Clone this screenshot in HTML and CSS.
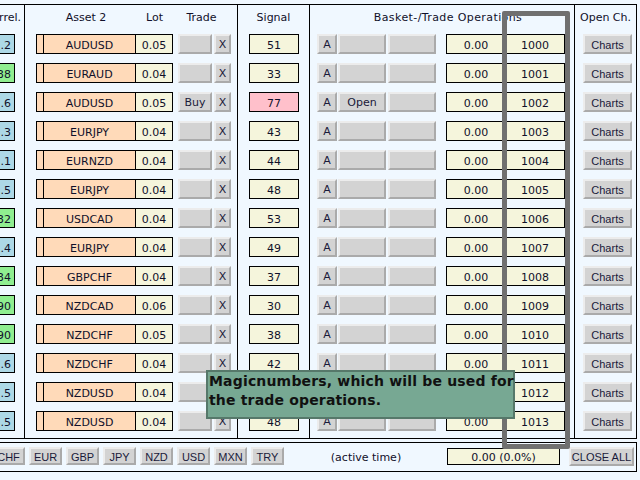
FILE: index.html
```html
<!DOCTYPE html>
<html>
<head>
<meta charset="utf-8">
<link rel="stylesheet" href="styles.css">
</head>
<body>
<div class="stage">
  <div class="panel">
    <div class="col col-a">
      <div class="hdr hdr-a">Correl.</div>
      <div class="row"><div class="box corr blue">.2</div></div>
      <div class="row"><div class="box corr green">38</div></div>
      <div class="row"><div class="box corr blue">.6</div></div>
      <div class="row"><div class="box corr blue">.3</div></div>
      <div class="row"><div class="box corr blue">.1</div></div>
      <div class="row"><div class="box corr blue">.5</div></div>
      <div class="row"><div class="box corr green">32</div></div>
      <div class="row"><div class="box corr blue">.4</div></div>
      <div class="row"><div class="box corr green">34</div></div>
      <div class="row"><div class="box corr green">90</div></div>
      <div class="row"><div class="box corr green">90</div></div>
      <div class="row"><div class="box corr blue">.6</div></div>
      <div class="row"><div class="box corr blue">.5</div></div>
      <div class="row"><div class="box corr blue">.5</div></div>
    </div>
    <div class="col col-b">
      <div class="hdr hdr-b"><span class="h-asset">Asset 2</span><span class="h-lot">Lot</span><span class="h-trade">Trade</span></div>
      <div class="row"><div class="box thin"></div><div class="box asset">AUDUSD</div><div class="box lot">0.05</div><div class="btn trade"></div><div class="btn x">X</div></div>
      <div class="row"><div class="box thin"></div><div class="box asset">EURAUD</div><div class="box lot">0.04</div><div class="btn trade"></div><div class="btn x">X</div></div>
      <div class="row"><div class="box thin"></div><div class="box asset">AUDUSD</div><div class="box lot">0.05</div><div class="btn trade">Buy</div><div class="btn x">X</div></div>
      <div class="row"><div class="box thin"></div><div class="box asset">EURJPY</div><div class="box lot">0.04</div><div class="btn trade"></div><div class="btn x">X</div></div>
      <div class="row"><div class="box thin"></div><div class="box asset">EURNZD</div><div class="box lot">0.04</div><div class="btn trade"></div><div class="btn x">X</div></div>
      <div class="row"><div class="box thin"></div><div class="box asset">EURJPY</div><div class="box lot">0.04</div><div class="btn trade"></div><div class="btn x">X</div></div>
      <div class="row"><div class="box thin"></div><div class="box asset">USDCAD</div><div class="box lot">0.04</div><div class="btn trade"></div><div class="btn x">X</div></div>
      <div class="row"><div class="box thin"></div><div class="box asset">EURJPY</div><div class="box lot">0.04</div><div class="btn trade"></div><div class="btn x">X</div></div>
      <div class="row"><div class="box thin"></div><div class="box asset">GBPCHF</div><div class="box lot">0.04</div><div class="btn trade"></div><div class="btn x">X</div></div>
      <div class="row"><div class="box thin"></div><div class="box asset">NZDCAD</div><div class="box lot">0.06</div><div class="btn trade"></div><div class="btn x">X</div></div>
      <div class="row"><div class="box thin"></div><div class="box asset">NZDCHF</div><div class="box lot">0.05</div><div class="btn trade"></div><div class="btn x">X</div></div>
      <div class="row"><div class="box thin"></div><div class="box asset">NZDCHF</div><div class="box lot">0.04</div><div class="btn trade"></div><div class="btn x">X</div></div>
      <div class="row"><div class="box thin"></div><div class="box asset">NZDUSD</div><div class="box lot">0.04</div><div class="btn trade"></div><div class="btn x">X</div></div>
      <div class="row"><div class="box thin"></div><div class="box asset">NZDUSD</div><div class="box lot">0.04</div><div class="btn trade"></div><div class="btn x">X</div></div>
    </div>
    <div class="col col-c">
      <div class="hdr">Signal</div>
      <div class="row"><div class="box sig">51</div></div>
      <div class="row"><div class="box sig">33</div></div>
      <div class="row"><div class="box sig pink">77</div></div>
      <div class="row"><div class="box sig">43</div></div>
      <div class="row"><div class="box sig">44</div></div>
      <div class="row"><div class="box sig">48</div></div>
      <div class="row"><div class="box sig">53</div></div>
      <div class="row"><div class="box sig">49</div></div>
      <div class="row"><div class="box sig">37</div></div>
      <div class="row"><div class="box sig">30</div></div>
      <div class="row"><div class="box sig">38</div></div>
      <div class="row"><div class="box sig">42</div></div>
      <div class="row"><div class="box sig">45</div></div>
      <div class="row"><div class="box sig">48</div></div>
    </div>
    <div class="col col-d">
      <div class="hdr hdr-d">Basket-/Trade Operations</div>
      <div class="row"><div class="btn a">A</div><div class="btn op1"></div><div class="btn op2"></div><div class="box val">0.00</div><div class="box magic">1000</div></div>
      <div class="row"><div class="btn a">A</div><div class="btn op1"></div><div class="btn op2"></div><div class="box val">0.00</div><div class="box magic">1001</div></div>
      <div class="row"><div class="btn a">A</div><div class="btn op1">Open</div><div class="btn op2"></div><div class="box val">0.00</div><div class="box magic">1002</div></div>
      <div class="row"><div class="btn a">A</div><div class="btn op1"></div><div class="btn op2"></div><div class="box val">0.00</div><div class="box magic">1003</div></div>
      <div class="row"><div class="btn a">A</div><div class="btn op1"></div><div class="btn op2"></div><div class="box val">0.00</div><div class="box magic">1004</div></div>
      <div class="row"><div class="btn a">A</div><div class="btn op1"></div><div class="btn op2"></div><div class="box val">0.00</div><div class="box magic">1005</div></div>
      <div class="row"><div class="btn a">A</div><div class="btn op1"></div><div class="btn op2"></div><div class="box val">0.00</div><div class="box magic">1006</div></div>
      <div class="row"><div class="btn a">A</div><div class="btn op1"></div><div class="btn op2"></div><div class="box val">0.00</div><div class="box magic">1007</div></div>
      <div class="row"><div class="btn a">A</div><div class="btn op1"></div><div class="btn op2"></div><div class="box val">0.00</div><div class="box magic">1008</div></div>
      <div class="row"><div class="btn a">A</div><div class="btn op1"></div><div class="btn op2"></div><div class="box val">0.00</div><div class="box magic">1009</div></div>
      <div class="row"><div class="btn a">A</div><div class="btn op1"></div><div class="btn op2"></div><div class="box val">0.00</div><div class="box magic">1010</div></div>
      <div class="row"><div class="btn a">A</div><div class="btn op1"></div><div class="btn op2"></div><div class="box val">0.00</div><div class="box magic">1011</div></div>
      <div class="row"><div class="btn a">A</div><div class="btn op1"></div><div class="btn op2"></div><div class="box val">0.00</div><div class="box magic">1012</div></div>
      <div class="row"><div class="btn a">A</div><div class="btn op1"></div><div class="btn op2"></div><div class="box val">0.00</div><div class="box magic">1013</div></div>
    </div>
    <div class="col col-e">
      <div class="hdr">Open Ch.</div>
      <div class="row"><div class="btn charts">Charts</div></div>
      <div class="row"><div class="btn charts">Charts</div></div>
      <div class="row"><div class="btn charts">Charts</div></div>
      <div class="row"><div class="btn charts">Charts</div></div>
      <div class="row"><div class="btn charts">Charts</div></div>
      <div class="row"><div class="btn charts">Charts</div></div>
      <div class="row"><div class="btn charts">Charts</div></div>
      <div class="row"><div class="btn charts">Charts</div></div>
      <div class="row"><div class="btn charts">Charts</div></div>
      <div class="row"><div class="btn charts">Charts</div></div>
      <div class="row"><div class="btn charts">Charts</div></div>
      <div class="row"><div class="btn charts">Charts</div></div>
      <div class="row"><div class="btn charts">Charts</div></div>
      <div class="row"><div class="btn charts">Charts</div></div>
    </div>
  </div>
  <div class="footer">
    <div class="cur-group">
      <div class="btn cur">CHF</div>
      <div class="btn cur">EUR</div>
      <div class="btn cur">GBP</div>
      <div class="btn cur">JPY</div>
      <div class="btn cur">NZD</div>
      <div class="btn cur">USD</div>
      <div class="btn cur">MXN</div>
      <div class="btn cur">TRY</div>
    </div>
    <div class="active">(active time)</div>
    <div class="box total">0.00 (0.0%)</div>
    <div class="btn closeall">CLOSE ALL</div>
  </div>
  <div class="highlight"></div>
  <div class="tooltip">Magicnumbers, which will be used for<br>the trade operations.</div>
</div>
</body>
</html>
```
FILE: styles.css
```css
html, body {
  margin: 0;
  padding: 0;
}
body {
  background: #f0f8ff;
  overflow: hidden;
  font-family: "DejaVu Sans", Verdana, sans-serif;
  font-size: 11px;
  color: #10102a;
}
.stage {
  position: relative;
  width: 640px;
  height: 480px;
  overflow: hidden;
}
.panel {
  display: flex;
  margin: 4px 0 0 -30px;
  width: 667px;
  height: 435px;
  box-sizing: border-box;
  border: 1px solid #000;
}
.col {
  display: flex;
  flex-direction: column;
  border-right: 1px solid #000;
}
.col-a { width: 53px; }
.col-b { width: 212px; }
.col-c { width: 71px; }
.col-d { width: 264px; }
.col-e { width: 61px; border-right: none; }

.hdr {
  height: 25px;
  display: flex;
  align-items: center;
  justify-content: center;
  white-space: nowrap;
}
.hdr-a {
  justify-content: flex-end;
  padding-right: 3px;
}
.hdr-b {
  justify-content: flex-start;
  padding-left: 11px;
}
.h-asset { width: 100px; text-align: center; }
.h-lot { width: 37px; text-align: center; }
.h-trade { width: 53px; margin-left: 5px; text-align: center; padding-right: 6px; box-sizing: border-box; }
.hdr-d { padding-left: 12px; letter-spacing: 0.4px; }

.row {
  height: 29px;
  box-sizing: border-box;
  padding-top: 4px;
  display: flex;
  align-items: flex-start;
}
.col-a .row { justify-content: flex-end; padding-right: 9px; }
.col-b .row { padding-left: 11px; }
.col-c .row { padding-left: 11px; }
.col-d .row { padding-left: 7px; }
.col-e .row { padding-left: 8px; }

.box {
  height: 20px;
  box-sizing: border-box;
  border: 1px solid #000;
  padding-top: 2px;
  display: flex;
  align-items: center;
  justify-content: center;
  background: #f5f5dc;
  white-space: nowrap;
}
.btn {
  height: 20px;
  box-sizing: border-box;
  border: 2px solid;
  border-color: #ececec #aaaaaa #aaaaaa #ececec;
  background: #d3d3d3;
  padding-top: 1px;
  display: flex;
  align-items: center;
  justify-content: center;
  white-space: nowrap;
  color: #1a1a3a;
}

.corr {
  width: 30px;
  justify-content: flex-end;
  padding-right: 3px;
}
.blue { background: #add8e6; }
.green { background: #90ee90; }
.pink { background: #ffc0cb; }

.thin { width: 8px; background: #ffdab9; }
.asset { width: 93px; margin-left: -1px; background: #ffdab9; }
.lot { width: 38px; margin-left: -1px; }
.trade { width: 34px; margin-left: 5px; }
.x { width: 17px; margin-left: 2px; }

.sig { width: 50px; }

.a { width: 20px; }
.op1 { width: 48px; margin-left: 1px; }
.op2 { width: 48px; margin-left: 2px; }
.val { width: 60px; margin-left: 10px; }
.magic { width: 60px; margin-left: -1px; }

.charts {
  width: 49px;
  font-family: "Liberation Sans", Arial, sans-serif;
  font-size: 11px;
}

.footer {
  display: flex;
  align-items: flex-start;
  margin: 3px 0 0 -30px;
  width: 667px;
  height: 30px;
  box-sizing: border-box;
  border: 1px solid #000;
  padding: 4px 0 0 21px;
}
.cur-group {
  display: flex;
  gap: 4px;
}
.cur {
  width: 33px;
  height: 18px;
  font-family: "Liberation Sans", Arial, sans-serif;
  font-size: 11px;
}
.active {
  width: 162px;
  margin-left: 1px;
  height: 18px;
  padding-top: 2px;
  box-sizing: border-box;
  display: flex;
  align-items: center;
  justify-content: center;
  white-space: nowrap;
}
.total {
  width: 113px;
  height: 17px;
  margin-top: 1px;
  padding-top: 1px;
}
.closeall {
  width: 65px;
  height: 19px;
  margin-left: 9px;
  font-family: "Liberation Sans", Arial, sans-serif;
  font-size: 11px;
}

.highlight {
  position: absolute;
  left: 502px;
  top: 11px;
  width: 68px;
  height: 438px;
  box-sizing: border-box;
  border: 5px solid #707070;
  border-radius: 2px;
}
.tooltip {
  position: absolute;
  left: 206px;
  top: 370px;
  width: 309px;
  height: 49px;
  box-sizing: border-box;
  background: #77a893;
  border: 2px solid #56786a;
  padding: 0 0 0 1px;
  font-family: "DejaVu Sans", Verdana, sans-serif;
  font-weight: bold;
  font-size: 14px;
  letter-spacing: 0.17px;
  line-height: 19px;
  color: #111;
  white-space: nowrap;
}
```
